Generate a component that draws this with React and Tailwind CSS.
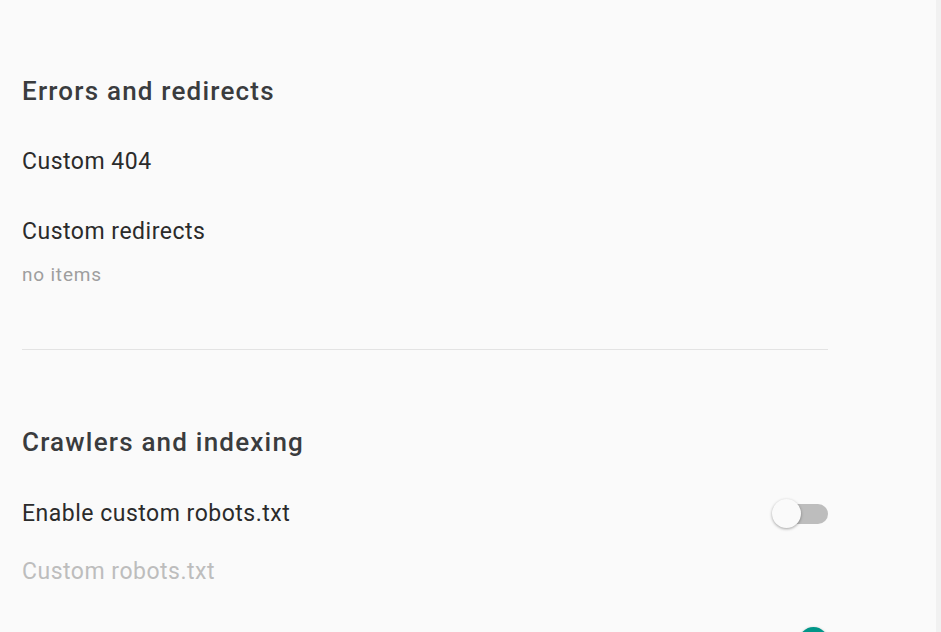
import React from 'react';

function Toggle({ on }) {
    return (
        <div className="relative h-[30px] w-[56px] shrink-0">
            <div className={`absolute right-0 top-[5px] h-[20px] w-[48px] rounded-full ${on ? 'bg-[#80cbc4]' : 'bg-[#bdbdbd]'}`}></div>
            <div
                className={`absolute top-0 h-[29px] w-[29px] rounded-full shadow-[0_1px_3px_rgba(0,0,0,0.35)] ${on ? 'right-0 bg-[#009688]' : 'left-0 bg-[#fafafa]'}`}
            ></div>
        </div>
    );
}

function App() {
    return (
        <div className="flex h-[632px] w-full overflow-hidden bg-[#fafafa] font-['Roboto',sans-serif]">
            <main className="flex-1 pl-[22px] pt-[71px]">
                <div className="w-[806px]">
                    <h2 className="text-[26px] font-medium leading-[40px] tracking-[1.2px] text-[#3a3c3e]">
                        Errors and redirects
                    </h2>
                    <div className="mt-[31px] text-[23px] leading-[40px] tracking-[0.5px] text-[#2b2b2b]">Custom 404</div>
                    <div className="mt-[35px] text-[23px] leading-[30px] tracking-[0.5px] text-[#2b2b2b]">Custom redirects</div>
                    <div className="mt-[16px] text-[19px] leading-[24px] tracking-[0.8px] text-[#9e9e9e]">no items</div>

                    <div className="mt-[62px] h-px bg-[#e3e3e3]"></div>

                    <h2 className="mt-[72px] text-[26px] font-medium leading-[40px] tracking-[1.2px] text-[#3a3c3e]">
                        Crawlers and indexing
                    </h2>
                    <div className="mt-[37px] flex items-center justify-between">
                        <span className="text-[23px] leading-[30px] tracking-[0.5px] text-[#2b2b2b]">Enable custom robots.txt</span>
                        <Toggle on={false} />
                    </div>
                    <div className="mt-[28px] text-[23px] leading-[30px] tracking-[0.5px] text-[#bdbdbd]">Custom robots.txt</div>
                    <div className="mt-[40px] flex items-center justify-end">
                        <Toggle on={true} />
                    </div>
                </div>
            </main>
            <div className="w-[5px] shrink-0 bg-[#f1f1f1]"></div>
        </div>
    );
}

export default App;
